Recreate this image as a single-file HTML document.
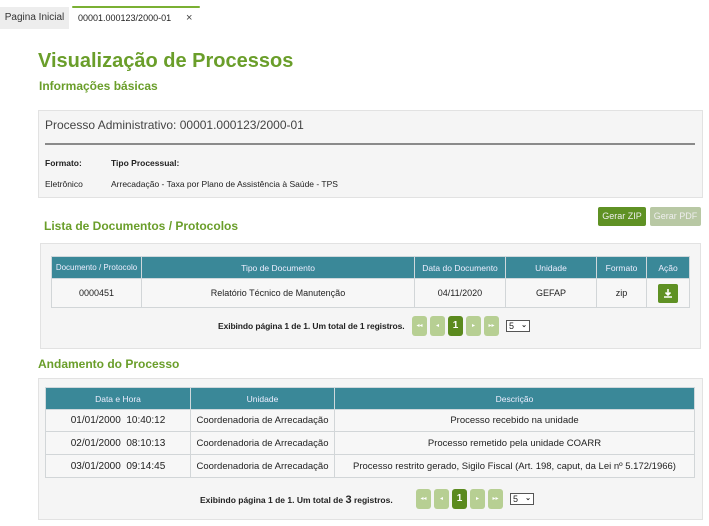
<!DOCTYPE html>
<html><head><meta charset="utf-8">
<style>
*{margin:0;padding:0;box-sizing:border-box}
body{width:709px;height:526px;background:#fff;font-family:"Liberation Sans",sans-serif;color:#222;position:relative;overflow:hidden}
.a{position:absolute;white-space:nowrap}
.g{color:#6a9e2a;font-weight:bold}
.box{position:absolute;background:#f5f5f5;border:1px solid #e2e2e2}
table{position:absolute;border-collapse:collapse;font-size:9px;background:#f7f7f7}
th{background:#3a8898;color:#eef;font-weight:normal;border:1px solid #cfd8dc;height:22px;white-space:nowrap;font-size:8.5px}
td{border:1px solid #d2d6d8;text-align:center;white-space:nowrap}
.pg{position:absolute;display:flex;gap:3px;align-items:center}
.pg span{display:inline-block;width:15px;height:20px;background:#b7cf93;border-radius:3px;color:#fff;font-size:6px;text-align:center;line-height:20px}
.pg span.on{background:#5b8a1e;font-size:10px;font-weight:bold}
.sel{display:inline-block;border:1px solid #555;background:#fff;font-size:9px;height:12px;width:24px;line-height:10px;padding-left:2px;margin-left:4px;position:relative}
.ptxt{position:absolute;font-size:8.5px;font-weight:bold;white-space:nowrap}
</style></head><body>
<div class="a" style="left:0;top:7px;width:69px;height:22px;background:#ededed;font-size:10px;color:#333;line-height:22px;text-align:center">Pagina Inicial</div>
<div class="a" style="left:72px;top:6px;width:128px;height:2px;background:#7ab033;border-radius:2px"></div>
<div class="a" style="left:78px;top:13px;font-size:9px;color:#222">00001.000123/2000-01</div>
<div class="a" style="left:186px;top:12px;font-size:11px;color:#444">×</div>

<div class="a g" style="left:38px;top:50px;font-size:20px">Visualização de Processos</div>
<div class="a g" style="left:39px;top:79px;font-size:12px">Informações básicas</div>

<div class="box" style="left:38px;top:110px;width:665px;height:88px"></div>
<div class="a" style="left:45px;top:118px;font-size:12px;color:#444">Processo Administrativo: 00001.000123/2000-01</div>
<div class="a" style="left:45px;top:143px;width:650px;height:2px;background:#8a8a8a"></div>
<div class="a" style="left:45px;top:158px;font-size:8.5px;font-weight:bold">Formato:</div>
<div class="a" style="left:111px;top:158px;font-size:8.5px;font-weight:bold">Tipo Processual:</div>
<div class="a" style="left:45px;top:179px;font-size:8.5px">Eletrônico</div>
<div class="a" style="left:111px;top:179px;font-size:8.5px">Arrecadação - Taxa por Plano de Assistência à Saúde - TPS</div>

<div class="a g" style="left:44px;top:219px;font-size:12px">Lista de Documentos / Protocolos</div>
<div class="a" style="left:598px;top:207px;width:48px;height:19px;background:#5f9124;border-radius:2px;color:#eee;font-size:9px;line-height:19px;text-align:center">Gerar ZIP</div>
<div class="a" style="left:650px;top:207px;width:51px;height:19px;background:#b8c8a4;border-radius:2px;color:#eee;font-size:9px;line-height:19px;text-align:center">Gerar PDF</div>

<div class="box" style="left:40px;top:243px;width:661px;height:106px"></div>
<table style="left:51px;top:256px;width:639px">
<tr><th style="width:90px;font-size:8px">Documento / Protocolo</th><th style="width:273px">Tipo de Documento</th><th style="width:91px">Data do Documento</th><th style="width:91px">Unidade</th><th style="width:50px">Formato</th><th>Ação</th></tr>
<tr style="height:29px"><td>0000451</td><td>Relatório Técnico de Manutenção</td><td>04/11/2020</td><td>GEFAP</td><td>zip</td><td><span style="display:inline-block;width:20px;height:19px;background:#5f9124;border-radius:2px;vertical-align:middle;position:relative"><svg width="20" height="19" viewBox="0 0 20 19" style="position:absolute;left:0;top:0"><path d="M10 5v6M7.5 8.5L10 11l2.5-2.5M6 13h8" stroke="#fff" stroke-width="1.6" fill="none"/></svg></span></td></tr>
</table>
<div class="ptxt" style="left:218px;top:321px;letter-spacing:-0.1px">Exibindo página 1 de 1. Um total de 1 registros.</div>
<div class="pg" style="left:412px;top:316px"><span>◂◂</span><span>◂</span><span class="on">1</span><span>▸</span><span>▸▸</span><div class="sel">5 <b style="position:absolute;right:2px;font-size:7px">⌄</b></div></div>

<div class="a g" style="left:38px;top:357px;font-size:12px">Andamento do Processo</div>
<div class="box" style="left:38px;top:378px;width:665px;height:142px"></div>
<table style="left:45px;top:387px;width:650px;font-size:9.5px">
<tr><th style="width:145px">Data e Hora</th><th style="width:144px">Unidade</th><th>Descrição</th></tr>
<tr style="height:22px"><td style="font-size:10px">01/01/2000&nbsp; 10:40:12</td><td>Coordenadoria de Arrecadação</td><td>Processo recebido na unidade</td></tr>
<tr style="height:23px"><td style="font-size:10px">02/01/2000&nbsp; 08:10:13</td><td>Coordenadoria de Arrecadação</td><td>Processo remetido pela unidade COARR</td></tr>
<tr style="height:23px"><td style="font-size:10px">03/01/2000&nbsp; 09:14:45</td><td>Coordenadoria de Arrecadação</td><td>Processo restrito gerado, Sigilo Fiscal (Art. 198, caput, da Lei nº 5.172/1966)</td></tr>
</table>
<div class="ptxt" style="left:200px;top:494px">Exibindo página 1 de 1. Um total de <span style="font-size:11px">3</span> registros.</div>
<div class="pg" style="left:416px;top:489px"><span>◂◂</span><span>◂</span><span class="on">1</span><span>▸</span><span>▸▸</span><div class="sel">5 <b style="position:absolute;right:2px;font-size:7px">⌄</b></div></div>
</body></html>
